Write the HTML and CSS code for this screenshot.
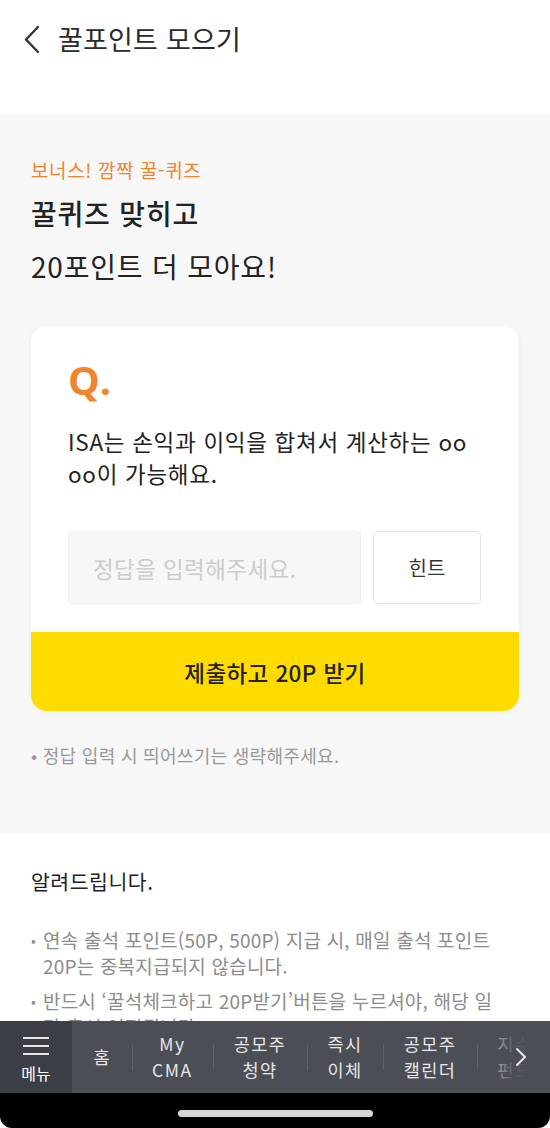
FILE: index.html
```html
<!DOCTYPE html>
<html lang="ko">
<head>
<meta charset="utf-8">
<title>꿀포인트 모으기</title>
<link rel="stylesheet" href="styles.css">
</head>
<body>
<div class="screen">
  <div class="content">
    <header class="topbar">
      <svg class="back" width="20" height="30" viewBox="0 0 20 30"><polyline points="15,2 3,14.5 15,27" fill="none" stroke="#333" stroke-width="2.4" stroke-linecap="round" stroke-linejoin="round"/></svg>
      <h1 class="title">꿀포인트 모으기</h1>
    </header>

    <section class="quiz">
      <p class="eyebrow">보너스! 깜짝 꿀-퀴즈</p>
      <h2 class="headline"><span class="strong">꿀퀴즈 맞히고</span><br>20포인트 더 모아요!</h2>

      <div class="card">
        <div class="card-body">
          <div class="q">Q.</div>
          <p class="question">ISA는 손익과 이익을 합쳐서 계산하는 oo<br>oo이 가능해요.</p>
          <div class="answer-row">
            <div class="answer">정답을 입력해주세요.</div>
            <div class="hint">힌트</div>
          </div>
        </div>
        <div class="submit">제출하고 20P 받기</div>
      </div>

      <p class="note">• 정답 입력 시 띄어쓰기는 생략해주세요.</p>
    </section>

    <section class="notice">
      <h3 class="notice-title">알려드립니다.</h3>
      <ul class="notice-list">
        <li>연속 출석 포인트(50P, 500P) 지급 시, 매일 출석 포인트 20P는 중복지급되지 않습니다.</li>
        <li>반드시 ‘꿀석체크하고 20P받기’버튼을 누르셔야, 해당 일간 출석 인정됩니다.</li>
      </ul>
    </section>
  </div>

  <nav class="tabbar">
    <div class="menu">
      <span class="burger"><i></i><i></i><i></i></span>
      <span class="menu-label">메뉴</span>
    </div>
    <div class="tabs">
      <div class="tab">홈</div>
      <div class="tab">My<br>CMA</div>
      <div class="tab">공모주<br>청약</div>
      <div class="tab">즉시<br>이체</div>
      <div class="tab">공모주<br>캘린더</div>
      <div class="tab">지수<br>펀드</div>
    </div>
    <div class="more">
      <svg width="14" height="20" viewBox="0 0 14 20"><polyline points="3,2 11,10 3,18" fill="none" stroke="#e6e6e6" stroke-width="2" stroke-linecap="round" stroke-linejoin="round"/></svg>
    </div>
  </nav>
  <div class="homebar"><span class="pill"></span></div>
</div>
</body>
</html>
```

FILE: styles.css
```css
* { box-sizing: border-box; margin: 0; padding: 0; }
html, body { background: #fff; }
body {
  font-family: "Noto Sans CJK KR", "Noto Sans", sans-serif;
  color: #222;
}
.screen {
  position: relative;
  width: 550px;
  height: 1128px;
  overflow: hidden;
  background: #fff;
  display: flex;
  flex-direction: column;
}
.content {
  height: 1021px;
  flex: none;
  overflow: hidden;
}

/* header */
.topbar {
  height: 114px;
  display: flex;
  align-items: flex-start;
  padding: 23px 0 0 23px;
}
.back { margin-top: 2px; }
.title {
  margin-left: 15px;
  font-size: 27px;
  font-weight: 400;
  line-height: 32px;
  color: #2a2a2a;
  letter-spacing: 0.2px;
}

/* quiz section */
.quiz {
  background: #f7f7f7;
  padding: 43px 31px 65px;
}
.eyebrow {
  font-size: 19px;
  line-height: 26px;
  color: #f0852d;
  letter-spacing: 0.6px;
}
.headline {
  margin-top: 4px;
  font-size: 28px;
  line-height: 53px;
  font-weight: 400;
  color: #222;
  letter-spacing: 0.8px;
}
.headline .strong { font-weight: 500; }

.card {
  margin-top: 33px;
  background: #fff;
  border-radius: 16px;
  overflow: hidden;
  box-shadow: 0 1px 6px rgba(0,0,0,0.05);
}
.card-body {
  padding: 29px 38px 28px 37px;
}
.q {
  font-size: 40px;
  font-weight: 700;
  line-height: 50px;
  color: #f0852d;
  font-family: "Open Sans", "Noto Sans", sans-serif;
}
.question {
  margin-top: 20px;
  font-size: 22.5px;
  line-height: 32px;
  color: #222;
  letter-spacing: 0.7px;
}
.answer-row {
  margin-top: 42px;
  display: flex;
  gap: 12px;
  height: 73px;
}
.answer {
  flex: 1;
  background: #f7f7f7;
  border: 1px solid #efefef;
  border-radius: 4px;
  display: flex;
  align-items: center;
  padding-left: 24px;
  font-size: 22.5px;
  color: #cccccc;
  letter-spacing: 0.4px;
}
.hint {
  width: 108px;
  border: 1.5px solid #e2e2e2;
  border-radius: 5px;
  display: flex;
  align-items: center;
  justify-content: center;
  font-size: 20px;
  color: #333;
}
.submit {
  height: 79px;
  background: #ffdb00;
  display: flex;
  align-items: center;
  justify-content: center;
  font-size: 22.5px;
  color: #222;
  font-weight: 500;
  letter-spacing: 0.4px;
}
.note {
  margin-top: 31px;
  font-size: 18px;
  line-height: 26px;
  color: #999;
  letter-spacing: 0.3px;
}

/* notice */
.notice {
  padding: 34px 31px 40px;
}
.notice-title {
  font-size: 20.5px;
  line-height: 28px;
  font-weight: 400;
  color: #222;
  letter-spacing: 0.5px;
}
.notice-list {
  list-style: none;
  margin-top: 32px;
  padding-right: 20px;
}
.notice-list li {
  position: relative;
  padding-left: 12px;
  font-size: 19px;
  line-height: 26px;
  color: #8c8c8c;
  margin-bottom: 9px;
  letter-spacing: 0.2px;
}
.notice-list li::before {
  content: "•";
  position: absolute;
  left: 0;
  top: 0;
  font-size: 14px;
}

/* tab bar */
.tabbar {
  position: relative;
  height: 72px;
  flex: none;
  background: #4b4e55;
  display: flex;
  color: #e6e6e6;
}
.menu {
  width: 72px;
  flex: none;
  background: #3b3e45;
  display: flex;
  flex-direction: column;
  align-items: center;
  padding-top: 16px;
}
.burger {
  display: flex;
  flex-direction: column;
  gap: 6px;
  width: 26px;
}
.burger i {
  display: block;
  height: 2px;
  background: #e6e6e6;
}
.menu-label {
  margin-top: 8px;
  font-size: 16px;
  line-height: 20px;
  color: #fff;
}
.tabs {
  display: flex;
  align-items: center;
  overflow: hidden;
  padding-left: 1px;
}
.tab {
  flex: none;
  padding: 0 20.5px;
  font-size: 17.5px;
  line-height: 26px;
  text-align: center;
  position: relative;
  letter-spacing: 1.5px;
}
.tab + .tab::before {
  content: "";
  position: absolute;
  left: 0;
  top: 50%;
  height: 26px;
  margin-top: -13px;
  width: 1px;
  background: #5e6168;
}
.more {
  position: absolute;
  right: 0;
  top: 0;
  bottom: 0;
  width: 70px;
  display: flex;
  align-items: center;
  justify-content: flex-end;
  padding-right: 22px;
  background: linear-gradient(to right, rgba(75,78,85,0) 0%, rgba(75,78,85,0.85) 45%, #4b4e55 70%);
}
.homebar {
  flex: 1;
  background: #000;
  border-radius: 0 0 12px 12px;
  display: flex;
  justify-content: center;
  padding-top: 17px;
}
.pill {
  width: 195px;
  height: 7px;
  border-radius: 4px;
  background: #d6d6d6;
}
```
